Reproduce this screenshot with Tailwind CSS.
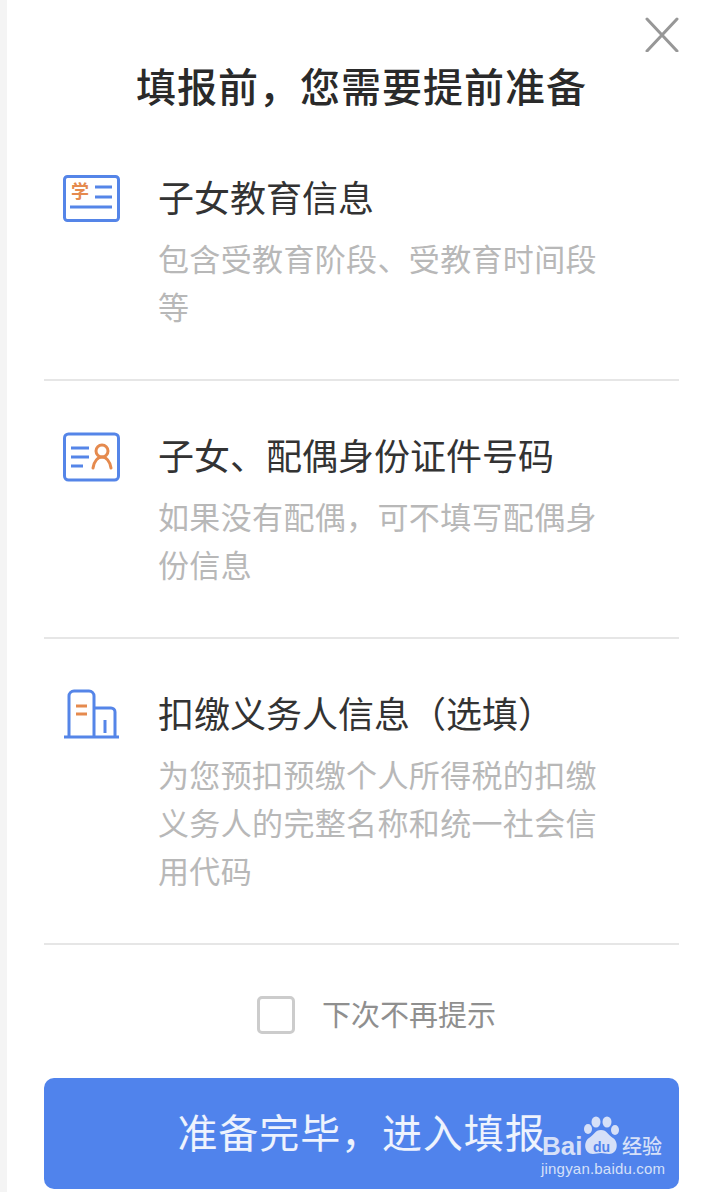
<!DOCTYPE html>
<html lang="zh-CN">
<head>
  <meta charset="UTF-8" />
  <meta name="viewport" content="width=device-width, initial-scale=1.0" />
  <title>填报前，您需要提前准备</title>
  <script src="https://cdn.jsdelivr.net/npm/@tailwindcss/browser@4"></script>
</head>
<body class="bg-white font-['Noto_Sans_CJK_SC','Noto_Sans',sans-serif]">
  <div class="relative w-[704px] h-[1192px] overflow-hidden bg-white border-l-[7px] border-[#f4f4f4] pl-[37px] pr-[25px]">
    <!-- Close -->
    <button class="absolute left-[637px] top-[16px] w-[36px] h-[36px]">
      <svg class="w-[36px] h-[36px]" viewBox="0 0 36 36" fill="none" stroke="#979797" stroke-width="3" stroke-linecap="round">
        <path d="M3 3l30 32M33 3L3 35"></path>
      </svg>
    </button>

    <!-- Title -->
    <h1 class="pt-[55px] h-[161px] text-center text-[40px] leading-[60px] tracking-[1px] font-medium text-[#2a2a2a]">填报前，您需要提前准备</h1>

    <!-- Item 1 -->
    <section class="flex h-[220px] border-b-2 border-[#e6e6e6]">
      <div class="w-[114px] pl-[19px] pt-[14px] shrink-0">
        <svg class="w-[58px] h-[48px]" viewBox="0 0 58 48" fill="none">
          <rect x="1.5" y="1.5" width="54" height="44" rx="3" stroke="#5585e8" stroke-width="3"></rect>
          <path d="M32 12h17M32 22h17M7 32h42" stroke="#5585e8" stroke-width="3"></path>
          <text x="8" y="23" font-size="18" font-weight="700" fill="#e58a4e" font-family="'Noto Sans CJK SC'">学</text>
        </svg>
      </div>
      <div class="flex-1">
        <h2 class="pt-[6px] text-[36px] leading-[58px] text-[#333333]">子女教育信息</h2>
        <p class="mt-[9px] w-[452px] text-[31px] leading-[48px] tracking-[0.35px] text-[#b8b8b8]">包含受教育阶段、受教育时间段等</p>
      </div>
    </section>

    <!-- Item 2 -->
    <section class="flex h-[258px] border-b-2 border-[#e6e6e6]">
      <div class="w-[114px] pl-[19px] pt-[51px] shrink-0">
        <svg class="w-[58px] h-[50px]" viewBox="0 0 58 50" fill="none">
          <rect x="1.5" y="2" width="54" height="46" rx="4" stroke="#5585e8" stroke-width="3"></rect>
          <path d="M8 16h18M8 25h18M8 34h12" stroke="#5585e8" stroke-width="3"></path>
          <circle cx="39" cy="19" r="6" stroke="#e58a4e" stroke-width="3"></circle>
          <path d="M30 36c1-7 5-11 9-11s8 4 9 11" stroke="#e58a4e" stroke-width="3" stroke-linecap="round"></path>
        </svg>
      </div>
      <div class="flex-1">
        <h2 class="pt-[44px] text-[36px] leading-[58px] text-[#333333]">子女、配偶身份证件号码</h2>
        <p class="mt-[9px] w-[452px] text-[31px] leading-[48px] tracking-[0.35px] text-[#b8b8b8]">如果没有配偶，可不填写配偶身份信息</p>
      </div>
    </section>

    <!-- Item 3 -->
    <section class="flex h-[306px] border-b-2 border-[#e6e6e6]">
      <div class="w-[114px] pl-[19px] pt-[49px] shrink-0">
        <svg class="w-[58px] h-[52px]" viewBox="0 0 58 52" fill="none">
          <path d="M1 49h55" stroke="#5585e8" stroke-width="3"></path>
          <path d="M6 49V8a5 5 0 0 1 5-5h15a5 5 0 0 1 5 5v41" stroke="#5585e8" stroke-width="3"></path>
          <path d="M31 20h17a4 4 0 0 1 4 4v25" stroke="#5585e8" stroke-width="3"></path>
          <path d="M42 32v13" stroke="#5585e8" stroke-width="3"></path>
          <path d="M13 18h11M13 26h11" stroke="#e58a4e" stroke-width="3"></path>
        </svg>
      </div>
      <div class="flex-1">
        <h2 class="pt-[44px] text-[36px] leading-[58px] text-[#333333]">扣缴义务人信息（选填）</h2>
        <p class="mt-[9px] w-[452px] text-[31px] leading-[48px] tracking-[0.35px] text-[#b8b8b8]">为您预扣预缴个人所得税的扣缴义务人的完整名称和统一社会信用代码</p>
      </div>
    </section>

    <!-- Checkbox -->
    <label class="flex items-center h-[133px] pl-[213px]">
      <span class="w-[38px] h-[38px] rounded-[5px] border-[3px] border-[#cccccc] mt-[7px]"></span>
      <span class="ml-[27px] text-[29px] leading-[40px] text-[#8f8f8f] mt-[2px]">下次不再提示</span>
    </label>

    <!-- Submit -->
    <button class="block w-[635px] h-[111px] pb-[6px] rounded-[10px] bg-[#5083ec] text-[40px] tracking-[0.9px] text-white/90">准备完毕，进入填报</button>

    <!-- Watermark -->
    <div class="absolute left-[534px] top-[1116px] w-[130px] h-[62px]">
      <svg class="absolute left-[42px] top-0 w-[36px] h-[40px]" viewBox="0 0 36 40" fill="#d6e0f8">
        <ellipse cx="5" cy="13" rx="4" ry="5"></ellipse>
        <ellipse cx="13" cy="6" rx="4.5" ry="5.5"></ellipse>
        <ellipse cx="24" cy="6" rx="4.5" ry="5.5"></ellipse>
        <ellipse cx="32" cy="14" rx="4" ry="5"></ellipse>
        <path d="M18 14c6 0 7 5 12 8 6 4 5 16-4 16-3 0-5-1-8-1s-5 1-8 1c-9 0-10-12-4-16 5-3 6-8 12-8z"></path>
      </svg>
      <span class="absolute left-[1px] top-[15px] font-['Liberation_Sans'] font-bold text-[26px] leading-[30px] text-[#d6e0f8]">Bai</span>
      <span class="absolute left-[52px] top-[24px] font-['Liberation_Sans'] font-bold text-[14px] leading-[14px] text-[#5083ec]">du</span>
      <span class="absolute left-[81px] top-[16px] text-[20px] leading-[28px] font-medium text-[#d6e0f8]">经验</span>
      <span class="absolute left-0 top-[43px] font-['Liberation_Sans'] text-[15px] leading-[20px] tracking-[0.2px] text-[#d6e0f8]">jingyan.baidu.com</span>
    </div>
  </div>
</body>
</html>
